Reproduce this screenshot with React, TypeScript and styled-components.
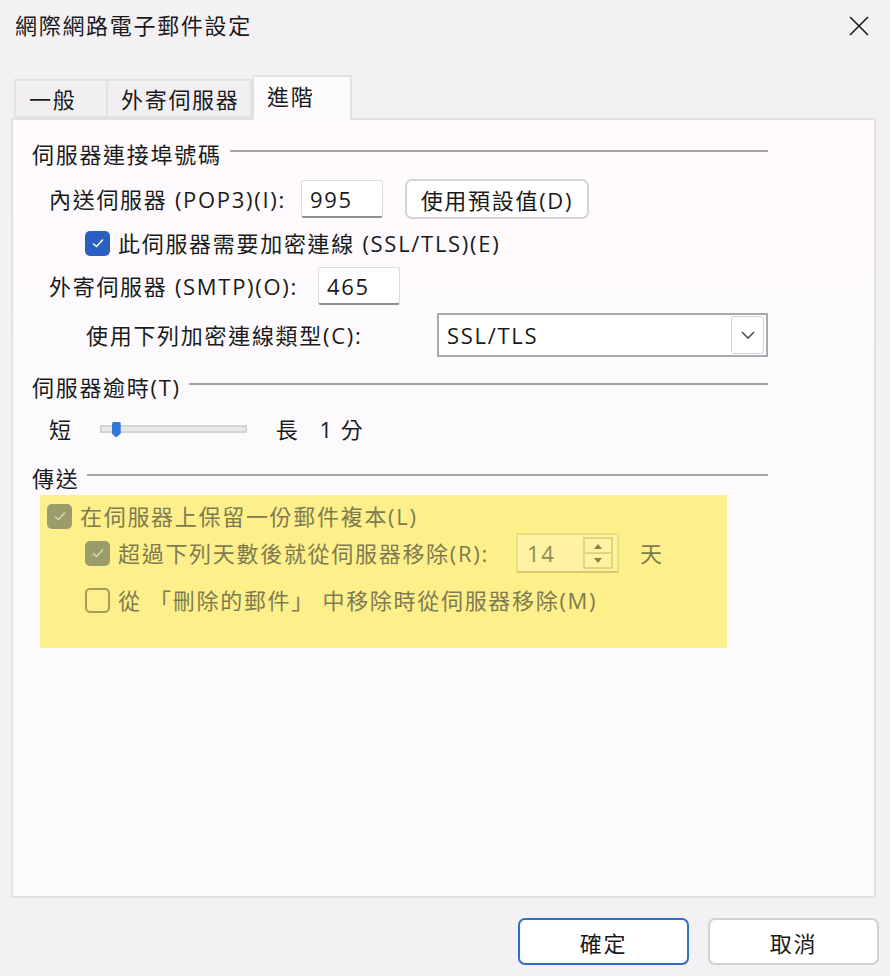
import styled, { createGlobalStyle } from 'styled-components'

const GlobalStyle = createGlobalStyle`
  html, body {
    margin: 0;
    padding: 0;
    background: #f4f1f4;
  }
  * {
    box-sizing: border-box;
  }
`

const FONT = `"Open Sans", "Noto Sans CJK TC", sans-serif`

type CheckState = 'checked' | 'mutedChecked' | 'mutedEmpty'

export default function App() {
  return (
    <>
      <GlobalStyle />
      <Dialog>
        <TitleBar>
          <Title>網際網路電子郵件設定</Title>
          <CloseButton aria-label="close">
            <svg width="22" height="22" viewBox="0 0 22 22">
              <path d="M2 2 L20 20 M20 2 L2 20" stroke="#1b1b1b" strokeWidth="1.6" />
            </svg>
          </CloseButton>
        </TitleBar>

        <TabStrip>
          <Tab width={94}>一般</Tab>
          <Tab width={144}>外寄伺服器</Tab>
          <Tab width={100} active>
            進階
          </Tab>
        </TabStrip>

        <Panel>
          <GroupHeader>
            <span>伺服器連接埠號碼</span>
            <Rule />
          </GroupHeader>

          <FieldRow top={11} height={40} indent={17}>
            <Label>內送伺服器 (POP3)(I):</Label>
            <TextBox width={82} height={38} gap={15}>
              995
            </TextBox>
            <PushButton>使用預設值(D)</PushButton>
          </FieldRow>

          <FieldRow top={4} height={40} indent={53}>
            <CheckBox state="checked" />
            <Label>此伺服器需要加密連線 (SSL/TLS)(E)</Label>
          </FieldRow>

          <FieldRow top={4} height={38} indent={17}>
            <Label>外寄伺服器 (SMTP)(O):</Label>
            <TextBox width={82} height={38} gap={20}>
              465
            </TextBox>
          </FieldRow>

          <FieldRow top={8} height={44} indent={54}>
            <Label>使用下列加密連線類型(C):</Label>
            <Select>
              <span>SSL/TLS</span>
              <SelectArrow>
                <svg width="16" height="10" viewBox="0 0 16 10">
                  <path d="M2 2 L8 8 L14 2" fill="none" stroke="#555" strokeWidth="1.6" />
                </svg>
              </SelectArrow>
            </Select>
          </FieldRow>

          <GroupHeader top={14}>
            <span>伺服器逾時(T)</span>
            <Rule />
          </GroupHeader>

          <FieldRow top={10} height={36} indent={17}>
            <Label>短</Label>
            <Track>
              <Thumb />
            </Track>
            <Label>長</Label>
            <Value>1</Value>
            <Label>分</Label>
          </FieldRow>

          <GroupHeader top={15}>
            <span>傳送</span>
            <Rule />
          </GroupHeader>

          <Highlight>
            <FieldRow top={0} height={42} indent={0} muted>
              <CheckBox state="mutedChecked" />
              <Label>在伺服器上保留一份郵件複本(L)</Label>
            </FieldRow>
            <FieldRow top={-5} height={42} indent={38} muted>
              <CheckBox state="mutedChecked" />
              <Label>超過下列天數後就從伺服器移除(R):</Label>
              <Spinner>
                <span>14</span>
                <SpinButtons>
                  <SpinHalf>
                    <svg width="10" height="6" viewBox="0 0 10 6">
                      <path d="M1 6 L5 1 L9 6 Z" fill="#8a8440" />
                    </svg>
                  </SpinHalf>
                  <SpinHalf>
                    <svg width="10" height="6" viewBox="0 0 10 6">
                      <path d="M1 0 L5 5 L9 0 Z" fill="#8a8440" />
                    </svg>
                  </SpinHalf>
                </SpinButtons>
              </Spinner>
              <DayLabel>天</DayLabel>
            </FieldRow>
            <FieldRow top={5} height={42} indent={38} muted>
              <CheckBox state="mutedEmpty" />
              <Label>從 「刪除的郵件」 中移除時從伺服器移除(M)</Label>
            </FieldRow>
          </Highlight>
        </Panel>

        <Footer>
          <DialogButton primary>確定</DialogButton>
          <DialogButton>取消</DialogButton>
        </Footer>
      </Dialog>
    </>
  )
}

function CheckBox({ state }: { state: CheckState }) {
  return (
    <Box state={state}>
      {state !== 'mutedEmpty' && (
        <svg width="14" height="12" viewBox="0 0 14 12">
          <path
            d="M2 6.5 L5.5 9.5 L12 2.5"
            fill="none"
            stroke={state === 'checked' ? '#ffffff' : '#d8d9b6'}
            strokeWidth="1.5"
          />
        </svg>
      )}
    </Box>
  )
}

const Dialog = styled.div`
  width: 890px;
  height: 976px;
  display: flex;
  flex-direction: column;
  font-family: ${FONT};
  font-size: 22px;
  letter-spacing: 1.7px;
  color: #1a1a1a;
  background: #f4f1f4;
`

const TitleBar = styled.div`
  height: 75px;
  display: flex;
  align-items: flex-start;
  justify-content: space-between;
  padding: 10px 16px 0 15px;
`

const Title = styled.div`
  line-height: 30px;
`

const CloseButton = styled.div`
  width: 30px;
  height: 30px;
  margin-top: 1px;
  display: flex;
  align-items: center;
  justify-content: center;
`

const TabStrip = styled.div`
  height: 43px;
  display: flex;
  align-items: flex-end;
  padding-left: 14px;
`

const Tab = styled.div<{ width: number; active?: boolean }>`
  width: ${(p) => p.width}px;
  height: ${(p) => (p.active ? 45 : 39)}px;
  margin-bottom: ${(p) => (p.active ? -2 : 0)}px;
  position: relative;
  z-index: ${(p) => (p.active ? 1 : 0)};
  padding: ${(p) => (p.active ? '4px' : '3px')} 0 0 13px;
  line-height: 30px;
  white-space: nowrap;
  background: ${(p) => (p.active ? '#fdfafd' : '#f2eff2')};
  border: 2px solid #e4e1e4;
  border-bottom: ${(p) => (p.active ? 'none' : '2px solid #e4e1e4')};
  border-left: ${(p) => (p.active ? '2px solid #e4e1e4' : 'none')};
  &:first-child {
    border-left: 2px solid #e4e1e4;
  }
`

const Panel = styled.div`
  margin-left: 11px;
  width: 865px;
  height: 780px;
  background: linear-gradient(#fefafe, #fbfafc);
  border: 2px solid #e4e1e4;
  padding: 18px 106px 0 19px;
  display: flex;
  flex-direction: column;
`

const GroupHeader = styled.div<{ top?: number }>`
  margin-top: ${(p) => p.top ?? 0}px;
  height: 30px;
  flex-shrink: 0;
  display: flex;
  align-items: center;
  gap: 8px;
  white-space: nowrap;
`

const Rule = styled.div`
  flex: 1;
  height: 2px;
  margin-top: -4px;
  background: #a4a4a6;
`

const FieldRow = styled.div<{ top: number; height: number; indent: number; muted?: boolean }>`
  margin-top: ${(p) => p.top}px;
  height: ${(p) => p.height}px;
  flex-shrink: 0;
  padding-left: ${(p) => p.indent}px;
  display: flex;
  align-items: center;
  white-space: nowrap;
  color: ${(p) => (p.muted ? '#7f7a52' : '#1a1a1a')};
`

const Label = styled.span`
  line-height: 30px;
  white-space: pre;
`

const TextBox = styled.div<{ width: number; height: number; gap: number }>`
  width: ${(p) => p.width}px;
  height: ${(p) => p.height}px;
  margin-left: ${(p) => p.gap}px;
  padding: 0 8px;
  display: flex;
  align-items: center;
  background: #ffffff;
  border: 1px solid #dedbde;
  border-bottom: 2px solid #8e8e8e;
  border-radius: 3px;
`

const PushButton = styled.div`
  margin-left: 22px;
  width: 184px;
  height: 40px;
  display: flex;
  align-items: center;
  justify-content: center;
  background: #ffffff;
  border: 2px solid #d6d3d6;
  border-radius: 7px;
`

const Box = styled.span<{ state: CheckState }>`
  width: 25px;
  height: 25px;
  margin-right: 8px;
  border-radius: 5px;
  display: inline-flex;
  align-items: center;
  justify-content: center;
  flex-shrink: 0;
  background: ${(p) =>
    p.state === 'checked' ? '#2b5fc4' : p.state === 'mutedChecked' ? '#9a9c6c' : 'transparent'};
  border: ${(p) => (p.state === 'mutedEmpty' ? '2px solid #a39d62' : 'none')};
`

const Select = styled.div`
  margin-left: auto;
  width: 331px;
  height: 44px;
  display: flex;
  align-items: center;
  justify-content: space-between;
  padding: 0 2px 0 8px;
  background: #ffffff;
  border: 2px solid #a9a9b0;
`

const SelectArrow = styled.div`
  width: 33px;
  height: 38px;
  display: flex;
  align-items: center;
  justify-content: center;
  border: 1px solid #d3d3d3;
  border-radius: 3px;
`

const Track = styled.div`
  margin: 0 29px 0 27px;
  width: 147px;
  height: 8px;
  background: #e7e8e8;
  border: 2px solid #d4d4d4;
  display: flex;
  align-items: center;
  padding-left: 10px;
`

const Thumb = styled.div`
  width: 9px;
  height: 16px;
  margin-top: 1px;
  background: #3477d6;
  border-radius: 2px 2px 1px 1px;
  clip-path: polygon(0 0, 100% 0, 100% 75%, 50% 100%, 0 75%);
`

const Value = styled.span`
  margin: 0 7px 0 20px;
  line-height: 30px;
`

const Highlight = styled.div`
  margin: 3px 0 0 8px;
  width: 687px;
  height: 153px;
  flex-shrink: 0;
  background: #fdf08a;
  padding: 0 0 0 7px;
  display: flex;
  flex-direction: column;
`

const Spinner = styled.div`
  margin-left: 27px;
  width: 103px;
  height: 40px;
  display: flex;
  align-items: center;
  justify-content: space-between;
  padding: 0 4px 0 9px;
  background: #fdf3a2;
  border: 2px solid #eddf7e;
  border-bottom-color: #d8c970;
  color: #8f8a55;
`

const SpinButtons = styled.div`
  width: 30px;
  height: 32px;
  display: flex;
  flex-direction: column;
  border: 2px solid #e3d57a;
`

const SpinHalf = styled.div`
  flex: 1;
  display: flex;
  align-items: center;
  justify-content: center;
  & + & {
    border-top: 2px solid #e3d57a;
  }
`

const DayLabel = styled.span`
  margin-left: 21px;
  line-height: 30px;
`

const Footer = styled.div`
  flex: 1;
  display: flex;
  justify-content: flex-end;
  align-items: flex-start;
  gap: 19px;
  padding: 20px 11px 0 0;
`

const DialogButton = styled.div<{ primary?: boolean }>`
  width: 171px;
  height: 47px;
  display: flex;
  align-items: center;
  justify-content: center;
  background: #ffffff;
  border: 2px solid ${(p) => (p.primary ? '#2f6fca' : '#d3d0d3')};
  border-radius: 7px;
`
